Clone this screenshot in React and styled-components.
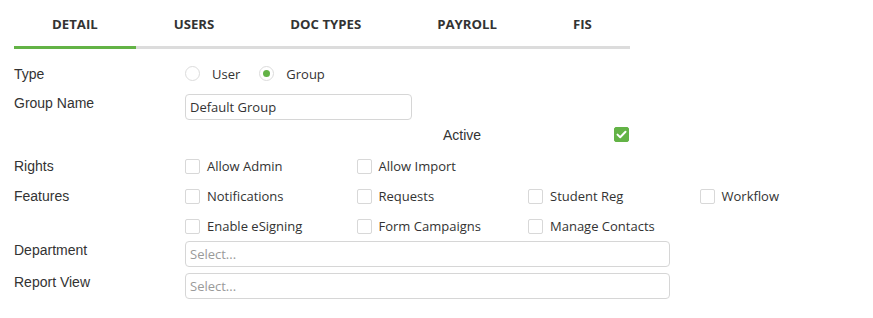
import React from "react";
import styled, { createGlobalStyle } from "styled-components";

const Global = createGlobalStyle`
  html, body { margin: 0; padding: 0; background: #fff; }
  body { font-family: "Open Sans", sans-serif; color: #333; }
`;

const GREEN = "#63b346";

const Page = styled.div`
  padding: 0 0 0 14px;
`;

const TabBar = styled.div`
  display: flex;
  width: fit-content;
`;

const Tab = styled.div`
  height: 49px;
  padding: 1px 38px 0;
  box-sizing: border-box;
  display: flex;
  align-items: center;
  font-family: "Open Sans", sans-serif;
  font-weight: 700;
  font-size: 13.2px;
  color: #333;
  border-bottom: 3px solid ${(p) => (p.$active ? GREEN : "#dcdcdc")};
`;

const Form = styled.div`
  padding-top: 12px;
  display: flex;
  flex-direction: column;
`;

const Row = styled.div`
  display: flex;
  align-items: ${(p) => p.$align || "center"};
  min-height: ${(p) => p.$h}px;
  margin-top: ${(p) => p.$mt || 0}px;
  padding-left: ${(p) => p.$indent || 0}px;
`;

const Label = styled.div`
  width: 171px;
  flex: none;
  font-family: "Liberation Sans", Arial, sans-serif;
  font-size: 14px;
  line-height: 16px;
  color: #333;
  margin-top: ${(p) => p.$pt || 0}px;
`;

const RadioGroup = styled.div`
  display: flex;
  align-items: center;
  gap: 19px;
`;

const RadioItem = styled.label`
  display: flex;
  align-items: center;
  gap: 12px;
  font-size: 13px;
  color: #333;
`;

const RadioCircle = styled.span`
  width: 13px;
  height: 13px;
  border: 1px solid #dcdcdc;
  border-radius: 50%;
  display: flex;
  align-items: center;
  justify-content: center;
  &::after {
    content: "";
    width: 7px;
    height: 7px;
    border-radius: 50%;
    background: ${(p) => (p.$checked ? GREEN : "transparent")};
  }
`;

const TextInput = styled.div`
  box-sizing: border-box;
  width: ${(p) => p.$w}px;
  height: 26px;
  border: 1px solid #d6d6d6;
  border-radius: 4px;
  padding: 0 4px;
  display: flex;
  align-items: center;
  font-size: 13px;
  color: ${(p) => (p.$placeholder ? "#9a9a9a" : "#333")};
`;

const OptionGrid = styled.div`
  display: grid;
  grid-template-columns: repeat(4, 171.5px);
  grid-auto-rows: 15px;
  row-gap: 15px;
`;

const Option = styled.label`
  display: flex;
  align-items: center;
  gap: 7px;
  font-size: 13px;
  line-height: 15px;
  color: #333;
  white-space: nowrap;
`;

const Box = styled.span`
  box-sizing: border-box;
  width: 15px;
  height: 15px;
  flex: none;
  border-radius: 2px;
  border: 1px solid ${(p) => (p.$checked ? GREEN : "#d8d8d8")};
  background: ${(p) => (p.$checked ? GREEN : "#fff")};
  display: flex;
  align-items: center;
  justify-content: center;
`;

const Check = () => (
  <svg width="11" height="9" viewBox="0 0 11 9">
    <path d="M1.5 4.6 L4.2 7.2 L9.5 1.8" fill="none" stroke="#fff" strokeWidth="2" strokeLinecap="round" strokeLinejoin="round" />
  </svg>
);

const CheckOption = ({ label, checked }) => (
  <Option>
    <Box $checked={checked}>{checked && <Check />}</Box>
    {label}
  </Option>
);

const tabs = ["DETAIL", "USERS", "DOC TYPES", "PAYROLL", "FIS"];

export default function App() {
  return (
    <Page>
      <Global />
      <TabBar>
        {tabs.map((t, i) => (
          <Tab key={t} $active={i === 0}>{t}</Tab>
        ))}
      </TabBar>
      <Form>
        <Row $h={25}>
          <Label>Type</Label>
          <RadioGroup>
            <RadioItem><RadioCircle />User</RadioItem>
            <RadioItem><RadioCircle $checked />Group</RadioItem>
          </RadioGroup>
        </Row>
        <Row $h={26} $mt={8} $align="flex-start">
          <Label $pt={1}>Group Name</Label>
          <TextInput $w={227}>Default Group</TextInput>
        </Row>
        <Row $h={17} $mt={6} $indent={429}>
          <Label>Active</Label>
          <Box $checked><Check /></Box>
        </Row>
        <Row $h={15} $mt={16} $align="flex-start">
          <Label $pt={-1}>Rights</Label>
          <OptionGrid>
            <CheckOption label="Allow Admin" />
            <CheckOption label="Allow Import" />
          </OptionGrid>
        </Row>
        <Row $h={15} $mt={15} $align="flex-start">
          <Label $pt={-1}>Features</Label>
          <OptionGrid>
            <CheckOption label="Notifications" />
            <CheckOption label="Requests" />
            <CheckOption label="Student Reg" />
            <CheckOption label="Workflow" />
            <CheckOption label="Enable eSigning" />
            <CheckOption label="Form Campaigns" />
            <CheckOption label="Manage Contacts" />
          </OptionGrid>
        </Row>
        <Row $h={26} $mt={7} $align="flex-start">
          <Label $pt={1}>Department</Label>
          <TextInput $w={485} $placeholder>Select...</TextInput>
        </Row>
        <Row $h={26} $mt={6} $align="flex-start">
          <Label $pt={1}>Report View</Label>
          <TextInput $w={485} $placeholder>Select...</TextInput>
        </Row>
      </Form>
    </Page>
  );
}
